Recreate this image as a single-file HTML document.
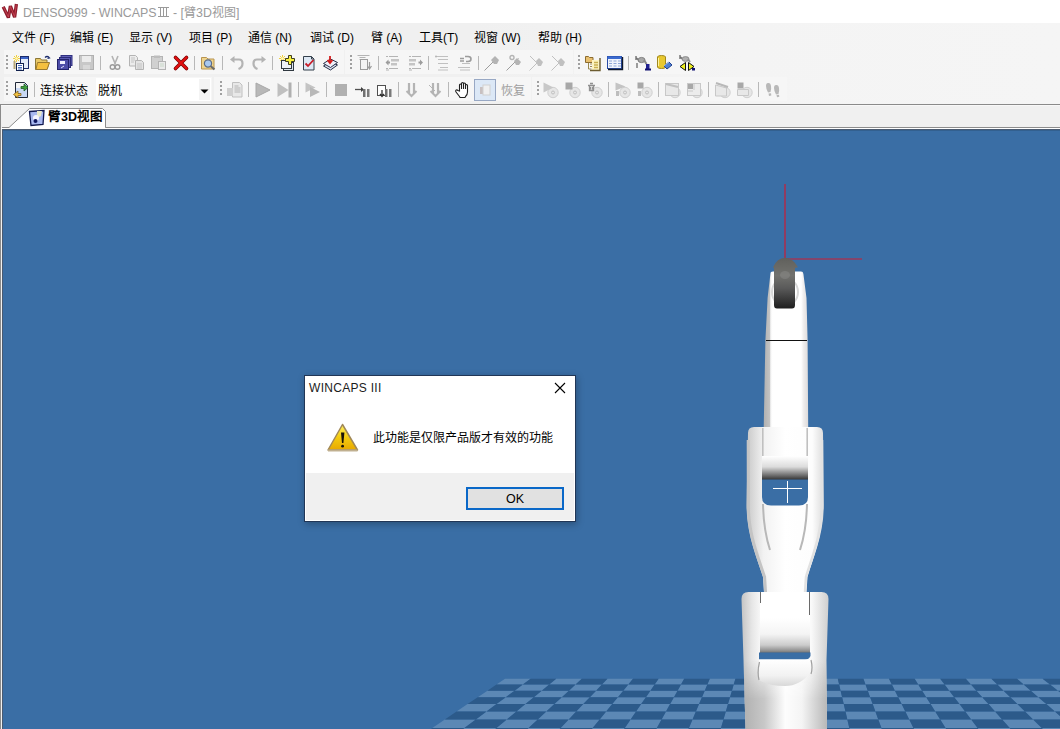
<!DOCTYPE html>
<html lang="zh-CN"><head><meta charset="utf-8">
<style>
*{box-sizing:border-box}
html,body{margin:0;padding:0;width:1060px;height:729px;overflow:hidden;background:linear-gradient(90deg,#f0f0f0 0%,#f0f0f0 45%,#f4f4f4 70%,#f5f5f5 100%);font-family:"Liberation Sans",sans-serif;font-size:12px;color:#000}
.abs{position:absolute}
.ic{position:absolute;overflow:visible}
.txt{white-space:nowrap;font-size:12px;line-height:14px}
#title{left:0;top:0;width:1060px;height:23px;background:#fff}
#title .t{left:23px;top:6px;color:#9a9a9a;font-size:12.4px;line-height:15px;white-space:nowrap}
#menu{left:0;top:23px;width:1060px;height:26px;background:transparent}
#menu span{position:absolute;top:8px;white-space:nowrap;font-size:12px;line-height:14px;color:#000}
.tb{background:#f6f6f6}
.grip{position:absolute;width:2px;height:2px;background:#a0a0a0}
.sep{position:absolute;width:1px;background:#b8b8b8}
#view{left:3px;top:130px;width:1057px;height:599px;background:#3a6ea5;overflow:hidden}
</style></head><body>
<div id="title" class="abs">
  <svg class="ic" style="left:0;top:0" width="22" height="22" viewBox="0 0 22 22"><path d="M3.2 6.8 L8.4 17.6 L10.4 6 L14.6 17.2 L16.4 4" fill="none" stroke="#8c1c2c" stroke-width="3.3" stroke-linejoin="bevel"/><path d="M3.4 7 L8.4 17 L10.4 6.5 L14.6 16.6 L16.3 4.6" fill="none" stroke="#d24a5a" stroke-width="1" opacity="0.8"/></svg>
  <div class="abs t">DENSO999 - WINCAPS<svg width="11" height="10" viewBox="0 0 11 10" style="vertical-align:0px;margin:0 1px 0 1px"><path d="M0 0.5h11M0 9.5h11M2.5 0v10M5.5 0v10M8.5 0v10" stroke="#9a9a9a" stroke-width="1"/></svg> - [<span style="font-size:12px">臂</span>3D<span style="font-size:12px">视图</span>]</div>
</div>
<div id="menu" class="abs">
  <span style="left:12px">文件 (F)</span>
  <span style="left:70px">编辑 (E)</span>
  <span style="left:129px">显示 (V)</span>
  <span style="left:189px">项目 (P)</span>
  <span style="left:248px">通信 (N)</span>
  <span style="left:310px">调试 (D)</span>
  <span style="left:371px">臂 (A)</span>
  <span style="left:419px">工具(T)</span>
  <span style="left:474px">视窗 (W)</span>
  <span style="left:538px">帮助 (H)</span>
</div>
<div class="abs tb" style="left:4px;top:50px;width:340px;height:24px"></div>
<div class="abs tb" style="left:345px;top:50px;width:228px;height:24px"></div>
<div class="abs tb" style="left:574px;top:50px;width:126px;height:24px"></div>
<div class="abs tb" style="left:4px;top:77px;width:208px;height:24px"></div>
<div class="abs tb" style="left:214px;top:77px;width:317px;height:24px"></div>
<div class="abs tb" style="left:532px;top:77px;width:255px;height:24px"></div>
<div class="grip" style="left:6px;top:55px"></div><div class="grip" style="left:6px;top:59px"></div><div class="grip" style="left:6px;top:63px"></div><div class="grip" style="left:6px;top:67px"></div>
<div class="grip" style="left:350px;top:55px"></div><div class="grip" style="left:350px;top:59px"></div><div class="grip" style="left:350px;top:63px"></div><div class="grip" style="left:350px;top:67px"></div>
<div class="grip" style="left:578px;top:55px"></div><div class="grip" style="left:578px;top:59px"></div><div class="grip" style="left:578px;top:63px"></div><div class="grip" style="left:578px;top:67px"></div>
<svg class="ic" style="left:13px;top:55px" width="16" height="16" viewBox="0 0 16 16"><path d="M0 3.5h7M3.5 0v7M1 1l5 5M6 1l-5 5" stroke="#f0d040" stroke-width="1"/><circle cx="3.5" cy="3.5" r="1.3" fill="#fff8c0"/>
<rect x="0.5" y="6" width="2" height="8" fill="#b8a878"/>
<rect x="7.5" y="1.5" width="8" height="12" fill="#e4ecf8" stroke="#1c2c6c"/>
<rect x="8" y="2" width="7" height="2" fill="#3c64c8"/>
<rect x="3.5" y="8.5" width="7" height="7" fill="#fff" stroke="#10204c"/>
<path d="M5 10.5h4M5 12.5h4M5 14h4" stroke="#4a70c0"/></svg>
<svg class="ic" style="left:35px;top:55px" width="16" height="16" viewBox="0 0 16 16"><path d="M0.5 3.5h5l1 1.5h5.5v3H14l-2 6.5H0.5Z" fill="#e8c868" stroke="#8c7838"/>
<path d="M2.5 7.5h12l-2.5 7h-11Z" fill="#f4c040" stroke="#9a7a30"/>
<path d="M10 2.5q2-2 4 0M13 1.5l1.5 1.5-2 .5" stroke="#1c2c6c" fill="none" stroke-width="1.2"/></svg>
<svg class="ic" style="left:57px;top:55px" width="16" height="16" viewBox="0 0 16 16"><rect x="4" y="0.5" width="11" height="10" fill="#6060b8" stroke="#303080"/>
<rect x="2.5" y="2.5" width="11" height="10" fill="#5858b0" stroke="#2c2c78"/>
<rect x="0.5" y="4.5" width="11" height="10" fill="#4c4ca8" stroke="#24246c"/>
<rect x="3" y="6" width="5" height="3" fill="#f0f0ff"/><path d="M4 13l3-2" stroke="#e0e0ff"/></svg>
<svg class="ic" style="left:79px;top:55px" width="16" height="16" viewBox="0 0 16 16"><rect x="0.5" y="0.5" width="14" height="14" fill="#c8c8c8" stroke="#b0b0b0"/>
<rect x="3" y="1" width="9" height="6" fill="#ececec"/><rect x="4" y="10" width="7" height="4.5" fill="#d8d8d8"/></svg>
<svg class="ic" style="left:107px;top:55px" width="16" height="16" viewBox="0 0 16 16"><path d="M5 1l3.5 8.5M11 1l-3.5 8.5" stroke="#b4b4b4" stroke-width="1.6"/>
<circle cx="5.5" cy="12" r="2.3" fill="none" stroke="#9c9c9c" stroke-width="1.4"/><circle cx="10.5" cy="12" r="2.3" fill="none" stroke="#9c9c9c" stroke-width="1.4"/></svg>
<svg class="ic" style="left:129px;top:55px" width="16" height="16" viewBox="0 0 16 16"><path d="M0.5 0.5h6l2 2v8.5h-8Z" fill="#ececec" stroke="#b4b4b4"/>
<path d="M6.5 5.5h6l2 2v7h-8Z" fill="#e4e4e4" stroke="#b4b4b4"/>
<path d="M2 3h4M2 5h4M2 7h3M8 9h5M8 11h5M8 13h5" stroke="#c4c4c4"/></svg>
<svg class="ic" style="left:151px;top:55px" width="16" height="16" viewBox="0 0 16 16"><rect x="0.5" y="1.5" width="11" height="12" fill="#d0d0d0" stroke="#b4b4b4"/>
<rect x="3" y="0.5" width="6" height="2.5" fill="#bdbdbd"/>
<rect x="7.5" y="6.5" width="7" height="8" fill="#eaeaea" stroke="#b4b4b4"/>
<path d="M9 9h4M9 11h4" stroke="#c8d8c8"/></svg>
<svg class="ic" style="left:173px;top:55px" width="16" height="16" viewBox="0 0 16 16"><path d="M2.5 2.5l11 11M13.5 2.5l-11 11" stroke="#7a0000" stroke-width="3.6" stroke-linecap="round"/>
<path d="M2.5 2.5l11 11M13.5 2.5l-11 11" stroke="#e41010" stroke-width="2.2" stroke-linecap="round"/></svg>
<svg class="ic" style="left:201px;top:55px" width="16" height="16" viewBox="0 0 16 16"><path d="M0.5 2.5h5l1.5 1.5h6v10h-12.5Z" fill="#f0d48c" stroke="#b89450"/>
<circle cx="7" cy="8.5" r="3.6" fill="#a8c8f0" stroke="#5a6c88" stroke-width="1.2"/>
<path d="M9.5 11l4 3.5" stroke="#6a6a6a" stroke-width="2"/></svg>
<svg class="ic" style="left:229px;top:55px" width="16" height="16" viewBox="0 0 16 16"><path d="M4 4.5h6q3.5 0 3.5 4 0 4-4 5.5" fill="none" stroke="#b4b4b4" stroke-width="2.2"/><path d="M1 4.5l4.5-3.5v7Z" fill="#b4b4b4"/></svg>
<svg class="ic" style="left:251px;top:55px" width="16" height="16" viewBox="0 0 16 16"><path d="M12 4.5h-6q-3.5 0-3.5 4 0 4 4 5.5" fill="none" stroke="#b4b4b4" stroke-width="2.2"/><path d="M15 4.5l-4.5-3.5v7Z" fill="#b4b4b4"/></svg>
<svg class="ic" style="left:279px;top:55px" width="16" height="16" viewBox="0 0 16 16"><path d="M0 3.5h7M3.5 0v7M1 1l5 5M6 1l-5 5" stroke="#f0d040" stroke-width="1"/><circle cx="3.5" cy="3.5" r="1.3" fill="#fff8c0"/>
<rect x="4.5" y="7.5" width="10" height="8" fill="#dde6f0" stroke="#303840"/>
<rect x="2.5" y="5.5" width="10" height="8" fill="#eef2f8" stroke="#303840"/>
<path d="M9.5 0.5h3v3h3v3h-3v3h-3v-3h-3v-3h3Z" fill="#f8f040" stroke="#404020"/></svg>
<svg class="ic" style="left:301px;top:55px" width="16" height="16" viewBox="0 0 16 16"><path d="M2.5 1.5h8l2.5 2.5v11h-10.5Z" fill="#dde8f4" stroke="#34404c"/><path d="M10.5 1.5v2.5h2.5" fill="none" stroke="#34404c"/>
<path d="M4.5 8.5l2.5 2.5 5.5-6" fill="none" stroke="#c81c28" stroke-width="1.8"/></svg>
<svg class="ic" style="left:323px;top:55px" width="16" height="16" viewBox="0 0 16 16"><path d="M0.5 11l7-4.5 7 3.5-7 5Z" fill="#dfe4f4" stroke="#283048"/>
<path d="M0.5 8.5l7-4.5 7 3.5-7 5Z" fill="#eef0fa" stroke="#283048"/>
<path d="M7 1v6.5M4.5 5l2.5 3 2.5-3" fill="none" stroke="#d41c1c" stroke-width="1.8"/></svg>
<svg class="ic" style="left:357px;top:55px" width="16" height="16" viewBox="0 0 16 16"><path d="M0.5 0.5h12M2.5 2.5h6M2.5 4.5h3" stroke="#b4b4b4"/>
<rect x="3.5" y="4.5" width="7" height="10" fill="#f4f4f4" stroke="#9c9c9c"/>
<path d="M12.5 7v6M10.5 11l2 3 2-3" fill="none" stroke="#9c9c9c" stroke-width="1.2"/></svg>
<svg class="ic" style="left:385px;top:55px" width="16" height="16" viewBox="0 0 16 16"><path d="M1 1.5h2M4 1.5h9M4 13.5h9M1 13.5h2M1 15h3" stroke="#b4b4b4" stroke-width="1.2"/>
<rect x="6" y="4" width="8" height="2.5" fill="#c4c4c4"/><rect x="6" y="8" width="6" height="2.5" fill="#c4c4c4"/>
<path d="M0.5 7.5l3-3v2h1.5v2H3.5v2Z" fill="#9c9c9c"/></svg>
<svg class="ic" style="left:408px;top:55px" width="16" height="16" viewBox="0 0 16 16"><path d="M1 1.5h2M4 1.5h9M4 13.5h9M1 13.5h2M1 15h3" stroke="#b4b4b4" stroke-width="1.2"/>
<rect x="1" y="4" width="7" height="2.5" fill="#c4c4c4"/><rect x="1" y="8" width="6" height="2.5" fill="#c4c4c4"/>
<path d="M15 7.5l-3-3v2h-1.5v2H12v2Z" fill="#9c9c9c"/></svg>
<svg class="ic" style="left:435px;top:55px" width="16" height="16" viewBox="0 0 16 16"><path d="M1 1.5h12M3 4.5h10M3 8.5h10M5 12.5h8M3 15h10" stroke="#c0c0c0" stroke-width="1.2"/><circle cx="1" cy="1.5" r="1" fill="#b4b4b4"/></svg>
<svg class="ic" style="left:457px;top:55px" width="16" height="16" viewBox="0 0 16 16"><path d="M1 12.5h12M3 15h10M5 8.5h8" stroke="#c0c0c0" stroke-width="1.2"/><path d="M8 1.5h3q3 0 3 2.5t-3 2.5H9M3 3.5h4M3 6h4" fill="none" stroke="#9c9c9c" stroke-width="1.6"/></svg>
<svg class="ic" style="left:484px;top:55px" width="16" height="16" viewBox="0 0 16 16"><path d="M0.5 15.5l9-9" stroke="#9c9c9c"/><path d="M7 5l4-4 4 4-2 4h-3Z" fill="#b4b4b4"/></svg>
<svg class="ic" style="left:506px;top:55px" width="16" height="16" viewBox="0 0 16 16"><path d="M0.5 15.5l12-12" stroke="#9c9c9c"/><path d="M8 6l3-3 4 4-2 3h-3Z" fill="#b4b4b4"/><circle cx="6" cy="2.5" r="2" fill="none" stroke="#b4b4b4" stroke-width="1.4"/></svg>
<svg class="ic" style="left:529px;top:55px" width="16" height="16" viewBox="0 0 16 16"><path d="M0.5 15.5l9-9M1 1l7 7" stroke="#c0c0c0"/><path d="M7 6l3-3 4 4-2 4h-3Z" fill="#c0c0c0"/></svg>
<svg class="ic" style="left:551px;top:55px" width="16" height="16" viewBox="0 0 16 16"><path d="M0.5 15.5l9-9M1 1l7 7" stroke="#c0c0c0"/><path d="M7 6l3-3 4 4-2 4h-3Z" fill="#c0c0c0"/></svg>
<svg class="ic" style="left:585px;top:55px" width="16" height="16" viewBox="0 0 16 16"><path d="M0.5 1.5h3l1 1h3.5v5h-7.5Z" fill="#e8c070" stroke="#8c6c30"/>
<path d="M3.5 8v6h3M5 9h3M5 11.5h3" fill="none" stroke="#9a8a50"/>
<rect x="7" y="5" width="8" height="10" fill="#fcf4c0"/><path d="M15 3v12.5H5" fill="none" stroke="#6c5c30" stroke-width="1.4"/>
<path d="M9 7.5h4M9 10h4M9 12.5h4" stroke="#c8b050" stroke-width="1.4"/></svg>
<svg class="ic" style="left:607px;top:55px" width="16" height="16" viewBox="0 0 16 16"><rect x="0.5" y="1.5" width="14" height="12" fill="#f0f4fc" stroke="#284ca8"/>
<rect x="0.5" y="1.5" width="14" height="2.5" fill="#3c6cd0"/>
<path d="M2 6h3M6.5 6h3M11 6h3M2 8.5h3M6.5 8.5h3M11 8.5h3M2 11h3M6.5 11h3M11 11h3" stroke="#90a8d8"/>
<path d="M15.5 2v12.5H1" fill="none" stroke="#101828" stroke-width="1.4"/></svg>
<svg class="ic" style="left:635px;top:55px" width="16" height="16" viewBox="0 0 16 16"><path d="M1 1v4M1.5 3l3 3" stroke="#707070" stroke-width="1.4"/><ellipse cx="6.5" cy="5" rx="3.5" ry="2.6" fill="#a8a8a8" stroke="#707070" stroke-width="0.8"/>
<path d="M9 5l2.5 4" stroke="#8a8a8a" stroke-width="2"/><path d="M2 8v5" stroke="#606060" stroke-width="1.2"/>
<rect x="11" y="9" width="3.5" height="5" fill="#202090"/><rect x="10" y="13.5" width="6" height="2" fill="#101070"/></svg>
<svg class="ic" style="left:657px;top:55px" width="16" height="16" viewBox="0 0 16 16"><path d="M0.5 2q0-1.5 4-1.5t4 1.5v10q0 1.5-4 1.5t-4-1.5Z" fill="#e8c830" stroke="#a08820"/>
<path d="M1.5 3v8" stroke="#fff4a0"/>
<path d="M7 11l5-4 3 3-5 4Z" fill="#5080d0" stroke="#204090"/><path d="M7 11l5-4" stroke="#a0c0f0"/></svg>
<svg class="ic" style="left:679px;top:55px" width="16" height="16" viewBox="0 0 16 16"><path d="M1 0v4M1.5 2l3 3" stroke="#707070" stroke-width="1.4"/><ellipse cx="6.5" cy="4" rx="3.5" ry="2.4" fill="#b0b0b0" stroke="#808080" stroke-width="0.8"/><path d="M9 4l2 3" stroke="#909090" stroke-width="1.8"/>
<path d="M6.5 7.5v8L1 11.5Z" fill="#f0f020" stroke="#101010"/>
<path d="M9.5 7.5v8l5.5-4Z" fill="#f0f020" stroke="#101010"/><rect x="13" y="13" width="3" height="2.5" fill="#101070"/></svg>
<div class="sep" style="left:100px;top:56px;height:14px"></div>
<div class="sep" style="left:194px;top:56px;height:14px"></div>
<div class="sep" style="left:222px;top:56px;height:14px"></div>
<div class="sep" style="left:272px;top:56px;height:14px"></div>
<div class="sep" style="left:378px;top:56px;height:14px"></div>
<div class="sep" style="left:428px;top:56px;height:14px"></div>
<div class="sep" style="left:478px;top:56px;height:14px"></div>
<div class="sep" style="left:628px;top:56px;height:14px"></div>
<div class="grip" style="left:6px;top:81px"></div><div class="grip" style="left:6px;top:85px"></div><div class="grip" style="left:6px;top:89px"></div><div class="grip" style="left:6px;top:93px"></div>
<div class="grip" style="left:220px;top:81px"></div><div class="grip" style="left:220px;top:85px"></div><div class="grip" style="left:220px;top:89px"></div><div class="grip" style="left:220px;top:93px"></div>
<div class="grip" style="left:537px;top:81px"></div><div class="grip" style="left:537px;top:85px"></div><div class="grip" style="left:537px;top:89px"></div><div class="grip" style="left:537px;top:93px"></div>
<svg class="ic" style="left:13px;top:82px" width="16" height="16" viewBox="0 0 16 16"><path d="M2.5 0.5h9l3 3v12h-12Z" fill="#c8d8f4" stroke="#202838"/>
<path d="M3 1h8v5H3Z" fill="#f4f4f4"/>
<path d="M8 4.5h3v-2.5l4 3.5-4 3.5v-2.5H8Z" fill="#40a040" stroke="#206020" stroke-width="0.8"/>
<path d="M8 11.5H5v-2.5l-4.5 3.5 4.5 3.5v-2.5h3Z" fill="#f0c040" stroke="#806020" stroke-width="0.8"/></svg>
<svg class="ic" style="left:227px;top:82px" width="16" height="16" viewBox="0 0 16 16"><path d="M5.5 0.5h7l2.5 2.5v12h-9.5Z" fill="#e8e8e8" stroke="#c0c0c0"/><rect x="0" y="6" width="6" height="8" fill="#d0d0d0"/>
<path d="M7.5 4h4M7.5 6h6M7.5 8h6M7.5 10h6" stroke="#b4b4b4"/></svg>
<svg class="ic" style="left:255px;top:82px" width="16" height="16" viewBox="0 0 16 16"><path d="M1 1l14 7-14 7Z" fill="#b8b8b8" stroke="#a8a8a8"/></svg>
<svg class="ic" style="left:277px;top:82px" width="16" height="16" viewBox="0 0 16 16"><path d="M0.5 1l11 7-11 7Z" fill="#c0c0c0"/><rect x="11.5" y="0.5" width="3" height="15" fill="#b0b0b0"/></svg>
<svg class="ic" style="left:305px;top:82px" width="16" height="16" viewBox="0 0 16 16"><path d="M0.5 0.5l10 5-10 5Z" fill="#c4c4c4"/><path d="M5 5l10 5-10 5Z" fill="#b8b8b8"/></svg>
<svg class="ic" style="left:333px;top:82px" width="16" height="16" viewBox="0 0 16 16"><rect x="2" y="2" width="12" height="12" fill="#b0b0b0"/></svg>
<svg class="ic" style="left:355px;top:82px" width="16" height="16" viewBox="0 0 16 16"><path d="M0 7.5h8" stroke="#505050" stroke-width="1.3"/><path d="M6 5l3 2.5-3 2.5Z" fill="#404040"/>
<rect x="8" y="7" width="2.5" height="8" fill="#707070"/><rect x="12" y="7" width="2.5" height="8" fill="#7a7a7a"/></svg>
<svg class="ic" style="left:377px;top:82px" width="16" height="16" viewBox="0 0 16 16"><rect x="0.5" y="3.5" width="8" height="10" fill="#fff" stroke="#505050"/>
<path d="M5 8v6M3 12l2 2.5 2-2.5" fill="none" stroke="#303030" stroke-width="1.3"/>
<rect x="8" y="7" width="2.5" height="8" fill="#707070"/><rect x="12" y="7" width="2.5" height="8" fill="#7a7a7a"/></svg>
<svg class="ic" style="left:406px;top:82px" width="16" height="16" viewBox="0 0 16 16"><path d="M3 1v10M8 1v10" stroke="#b4b4b4" stroke-width="2.2"/><path d="M0.5 9l5 5 5-5" fill="none" stroke="#b4b4b4" stroke-width="2"/></svg>
<svg class="ic" style="left:428px;top:82px" width="16" height="16" viewBox="0 0 16 16"><path d="M5 1v10M10 1v10" stroke="#b4b4b4" stroke-width="2.2"/><path d="M2.5 9l5 5 5-5" fill="none" stroke="#b4b4b4" stroke-width="2"/><path d="M1 3l6 6" stroke="#b4b4b4"/></svg>
<svg class="ic" style="left:455px;top:82px" width="16" height="16" viewBox="0 0 16 16"><path d="M4.5 9V3q0-1 1-1t1 1v4V1.5q0-1 1-1t1 1V7V2q0-1 1-1t1 1v5V3.5q0-1 1-1t1 1V10q0 3-2 4.5l-.5 1h-5l-.5-1L1 10q-.8-1 0-1.8t2 .3Z" fill="#fff" stroke="#202020" stroke-width="1.1"/></svg>
<svg class="ic" style="left:543px;top:82px" width="16" height="16" viewBox="0 0 16 16"><circle cx="10" cy="10.5" r="5.2" fill="#e6e6e6" stroke="#d0d0d0"/><circle cx="10" cy="10.5" r="1.5" fill="none" stroke="#c0c0c0"/><path d="M0.5 0.5l10 5-10 5Z" fill="#c8c8c8"/></svg>
<svg class="ic" style="left:565px;top:82px" width="16" height="16" viewBox="0 0 16 16"><circle cx="10" cy="10.5" r="5.2" fill="#e6e6e6" stroke="#d0d0d0"/><circle cx="10" cy="10.5" r="1.5" fill="none" stroke="#c0c0c0"/><rect x="0.5" y="0.5" width="7" height="7" fill="#a8a8a8"/></svg>
<svg class="ic" style="left:587px;top:82px" width="16" height="16" viewBox="0 0 16 16"><circle cx="10" cy="10.5" r="5.2" fill="#e6e6e6" stroke="#d0d0d0"/><circle cx="10" cy="10.5" r="1.5" fill="none" stroke="#c0c0c0"/><path d="M1 3.5h7M2.5 3.5v5h4v-5M3.5 5v2.5M5.5 5v2.5M3 1.5h3" fill="none" stroke="#909090" stroke-width="1.3"/></svg>
<svg class="ic" style="left:615px;top:82px" width="16" height="16" viewBox="0 0 16 16"><circle cx="10" cy="10.5" r="5.2" fill="#e6e6e6" stroke="#d0d0d0"/><circle cx="10" cy="10.5" r="1.5" fill="none" stroke="#c0c0c0"/><path d="M0.5 0.5l10 4-10 4Z" fill="#c4c4c4"/><rect x="1" y="9" width="3" height="5" fill="#bdbdbd"/></svg>
<svg class="ic" style="left:637px;top:82px" width="16" height="16" viewBox="0 0 16 16"><circle cx="10" cy="10.5" r="5.2" fill="#e6e6e6" stroke="#d0d0d0"/><circle cx="10" cy="10.5" r="1.5" fill="none" stroke="#c0c0c0"/><rect x="0.5" y="0.5" width="6" height="6" fill="#a8a8a8"/><rect x="1" y="9" width="3" height="5" fill="#bdbdbd"/></svg>
<svg class="ic" style="left:665px;top:82px" width="16" height="16" viewBox="0 0 16 16"><circle cx="10" cy="10.5" r="5.2" fill="#e6e6e6" stroke="#d0d0d0"/><circle cx="10" cy="10.5" r="1.5" fill="none" stroke="#c0c0c0"/><rect x="0.5" y="1.5" width="13" height="12" fill="#e8e8e8" stroke="#c8c8c8"/><path d="M1 2l12 3" stroke="#c0c0c0" stroke-width="2"/></svg>
<svg class="ic" style="left:687px;top:82px" width="16" height="16" viewBox="0 0 16 16"><circle cx="10" cy="10.5" r="5.2" fill="#e6e6e6" stroke="#d0d0d0"/><circle cx="10" cy="10.5" r="1.5" fill="none" stroke="#c0c0c0"/><rect x="0.5" y="1.5" width="13" height="12" fill="#ececec" stroke="#c8c8c8"/><rect x="1" y="2" width="5" height="5" fill="#a8a8a8"/><path d="M1 9h5M7 2v6" stroke="#c8c8c8"/></svg>
<svg class="ic" style="left:715px;top:82px" width="16" height="16" viewBox="0 0 16 16"><circle cx="10" cy="10.5" r="5.2" fill="#e6e6e6" stroke="#d0d0d0"/><circle cx="10" cy="10.5" r="1.5" fill="none" stroke="#c0c0c0"/><path d="M0.5 3l11 3v8H0.5Z" fill="#e8e8e8" stroke="#c8c8c8"/><path d="M1 1l12 4" stroke="#b8b8b8" stroke-width="2"/></svg>
<svg class="ic" style="left:737px;top:82px" width="16" height="16" viewBox="0 0 16 16"><circle cx="10" cy="10.5" r="5.2" fill="#e6e6e6" stroke="#d0d0d0"/><circle cx="10" cy="10.5" r="1.5" fill="none" stroke="#c0c0c0"/><rect x="0.5" y="0.5" width="6" height="6" fill="#a8a8a8"/><path d="M0.5 7.5h11v6H0.5Z" fill="#e8e8e8" stroke="#c8c8c8"/></svg>
<svg class="ic" style="left:765px;top:82px" width="16" height="16" viewBox="0 0 16 16"><path d="M3 1q2.5-.5 3 3t-.5 6l-2.5.5Q1 7 1 4t2-3Z" fill="#b8b8b8"/><path d="M3.5 11.5l2.5-.3.3 2.3-2.3.5Z" fill="#b8b8b8"/>
<path d="M11 3q2.5-.5 3 3t-.5 6l-2.5.5Q9 9 9 6t2-3Z" fill="#b8b8b8"/><path d="M11.5 13l2.5-.3.3 2-2.3.5Z" fill="#b8b8b8"/></svg>
<div class="sep" style="left:34px;top:82px;height:15px"></div>
<div class="sep" style="left:248px;top:82px;height:15px"></div>
<div class="sep" style="left:298px;top:82px;height:15px"></div>
<div class="sep" style="left:326px;top:82px;height:15px"></div>
<div class="sep" style="left:398px;top:82px;height:15px"></div>
<div class="sep" style="left:448px;top:82px;height:15px"></div>
<div class="sep" style="left:608px;top:82px;height:15px"></div>
<div class="sep" style="left:658px;top:82px;height:15px"></div>
<div class="sep" style="left:708px;top:82px;height:15px"></div>
<div class="sep" style="left:758px;top:82px;height:15px"></div>
<div class="abs txt" style="left:40px;top:84px">连接状态</div>
<div class="abs" style="left:96px;top:78px;width:115px;height:23px;background:#fff"></div>
<div class="abs" style="left:199px;top:79px;width:11px;height:21px;background:#f4f4f4"></div>
<svg class="ic" style="left:200px;top:89px" width="9" height="5" viewBox="0 0 9 5"><path d="M0.5 0.5h8l-4 4Z" fill="#000"/></svg>
<div class="abs txt" style="left:98px;top:84px">脱机</div>
<div class="abs" style="left:474px;top:79px;width:22px;height:22px;background:#dce8f6;border:1px solid #98a8c4"></div>
<svg class="ic" style="left:477px;top:82px" width="16" height="16" viewBox="0 0 16 16"><rect x="3" y="5" width="4" height="7" fill="#c8c0c0"/><rect x="6" y="3" width="7" height="10" fill="#f0f0f0" stroke="#d0d0d0"/></svg>
<div class="abs txt" style="left:501px;top:84px;color:#a0a0a0">恢复</div>
<div class="abs" style="left:0;top:104px;width:1060px;height:1px;background:#8a8a8a"></div>
<div class="abs" style="left:0;top:105px;width:1060px;height:25px;background:#f0f0f0"></div>
<div class="abs" style="left:0;top:104px;width:1px;height:625px;background:#8a8a8a"></div>
<div class="abs" style="left:2px;top:127px;width:1058px;height:1px;background:#a0a0a0"></div>
<div class="abs" style="left:1px;top:128px;width:1059px;height:1px;background:#fff"></div>
<div class="abs" style="left:2px;top:129px;width:1058px;height:1px;background:#4a5a70"></div>
<div class="abs" style="left:2px;top:129px;width:1px;height:600px;background:#4a5a70"></div>
<div class="abs" style="left:1px;top:105px;width:1059px;height:1px;background:#f8f8f8"></div>
<svg class="ic" style="left:0;top:104px" width="1060" height="26" viewBox="0 104 1060 26">
<path d="M2 129 V127.5 H9 L29.5 108.5 H102.5 L105.5 111.5 V129 Z" fill="#ffffff"/>
<path d="M2 127.5 H9 L29.5 108.5 H102.5 L105.5 111.5 V127.5 H1060" fill="none" stroke="#8c8c8c" stroke-width="1"/>
</svg>
<svg class="ic" style="left:28px;top:109px" width="18" height="18" viewBox="0 0 18 18">
<path d="M1.5 2.5 L16 1.5 L15 15.5 L3 16.5 Z" fill="#a8b8f0" stroke="#101850" stroke-width="1.3"/>
<path d="M9 2l5 0-1 5-4 2Z" fill="#e8e8c8"/>
<circle cx="8" cy="9" r="3" fill="#f4f4ff"/>
<circle cx="7.5" cy="12" r="2" fill="#101860"/>
</svg>
<div class="abs" style="left:48px;top:110px;font-weight:bold;font-size:12.5px;line-height:15px;white-space:nowrap">臂3D视图</div>

<div id="view" class="abs"><svg width="1057" height="599" viewBox="3 130 1057 599" style="position:absolute;left:0;top:0">
<defs>
<linearGradient id="gl" x1="0" x2="1" y1="0" y2="0"><stop offset="0" stop-color="#c8c8c8"/><stop offset="0.22" stop-color="#f2f2f2"/><stop offset="0.5" stop-color="#ffffff"/><stop offset="0.85" stop-color="#fdfdfd"/><stop offset="1" stop-color="#dcdcdc"/></linearGradient>
<linearGradient id="gcyl" x1="0" x2="0" y1="0" y2="1"><stop offset="0" stop-color="#ffffff"/><stop offset="0.45" stop-color="#dcdcdc"/><stop offset="0.85" stop-color="#606060"/><stop offset="1" stop-color="#303030"/></linearGradient>
<linearGradient id="gtool" x1="0" x2="0" y1="0" y2="1"><stop offset="0" stop-color="#60605c"/><stop offset="0.35" stop-color="#72726e"/><stop offset="0.6" stop-color="#5a5a5a"/><stop offset="1" stop-color="#1e1e1e"/></linearGradient>
<linearGradient id="gtoolh" x1="0" x2="1" y1="0" y2="0"><stop offset="0" stop-color="#000" stop-opacity="0.35"/><stop offset="0.4" stop-color="#000" stop-opacity="0"/><stop offset="1" stop-color="#000" stop-opacity="0.25"/></linearGradient>
<linearGradient id="gsh" x1="0" x2="1" y1="0" y2="0"><stop offset="0" stop-color="#c4c4c4"/><stop offset="0.12" stop-color="#e6e6e6"/><stop offset="0.22" stop-color="#f8f8f8"/><stop offset="0.5" stop-color="#ffffff"/><stop offset="0.8" stop-color="#fafafa"/><stop offset="1" stop-color="#cfcfcf"/></linearGradient>
<linearGradient id="gb" x1="0" x2="1" y1="0" y2="0"><stop offset="0" stop-color="#b0b0b0"/><stop offset="0.25" stop-color="#c8c8c8"/><stop offset="0.5" stop-color="#fdfdfd"/><stop offset="0.7" stop-color="#f4f4f4"/><stop offset="1" stop-color="#b8b8b8"/></linearGradient>
<linearGradient id="gdome" x1="0" x2="0" y1="0" y2="1"><stop offset="0" stop-color="#ffffff"/><stop offset="0.6" stop-color="#f2f2f2"/><stop offset="1" stop-color="#d8d8d8"/></linearGradient>
<linearGradient id="gfade" x1="0" x2="0" y1="0" y2="1"><stop offset="0" stop-color="#fff" stop-opacity="0"/><stop offset="0.55" stop-color="#fff" stop-opacity="1"/></linearGradient>
<mask id="mfade" maskUnits="userSpaceOnUse" x="740" y="660" width="90" height="70"><rect x="740" y="660" width="90" height="70" fill="url(#gfade)"/></mask>
<linearGradient id="gcyl2" x1="0" x2="0" y1="0" y2="1"><stop offset="0" stop-color="#ffffff"/><stop offset="0.45" stop-color="#f4f4f4"/><stop offset="0.75" stop-color="#cccccc"/><stop offset="0.92" stop-color="#8c8c8c"/><stop offset="1" stop-color="#565656"/></linearGradient>
<linearGradient id="gfa" x1="0" x2="1" y1="0" y2="0"><stop offset="0" stop-color="#b0b0b0"/><stop offset="0.13" stop-color="#c2c2c2"/><stop offset="0.16" stop-color="#f6f6f6"/><stop offset="0.2" stop-color="#ffffff"/><stop offset="0.84" stop-color="#ffffff"/><stop offset="0.9" stop-color="#eeecec"/><stop offset="1" stop-color="#dcdada"/></linearGradient>
</defs>
<path fill="#5c88b5" d="M505.00 678.70L530.60 678.70L522.83 684.49L496.46 684.49ZM556.20 678.70L581.80 678.70L575.55 684.49L549.19 684.49ZM607.40 678.70L633.00 678.70L628.27 684.49L601.91 684.49ZM658.60 678.70L684.20 678.70L680.99 684.49L654.63 684.49ZM709.80 678.70L735.40 678.70L733.71 684.49L707.35 684.49ZM761.00 678.70L786.60 678.70L786.43 684.49L760.07 684.49ZM812.20 678.70L837.80 678.70L839.15 684.49L812.79 684.49ZM863.40 678.70L889.00 678.70L891.87 684.49L865.51 684.49ZM914.60 678.70L940.20 678.70L944.59 684.49L918.23 684.49ZM965.80 678.70L991.40 678.70L997.32 684.49L970.95 684.49ZM1017.00 678.70L1042.60 678.70L1050.04 684.49L1023.68 684.49ZM1068.20 678.70L1093.80 678.70L1102.76 684.49L1076.40 684.49ZM522.83 684.49L549.19 684.49L541.74 690.63L514.57 690.63ZM575.55 684.49L601.91 684.49L596.08 690.63L568.91 690.63ZM628.27 684.49L654.63 684.49L650.41 690.63L623.24 690.63ZM680.99 684.49L707.35 684.49L704.75 690.63L677.58 690.63ZM733.71 684.49L760.07 684.49L759.08 690.63L731.92 690.63ZM786.43 684.49L812.79 684.49L813.42 690.63L786.25 690.63ZM839.15 684.49L865.51 684.49L867.75 690.63L840.59 690.63ZM891.87 684.49L918.23 684.49L922.09 690.63L894.92 690.63ZM944.59 684.49L970.95 684.49L976.42 690.63L949.26 690.63ZM997.32 684.49L1023.68 684.49L1030.76 690.63L1003.59 690.63ZM1050.04 684.49L1076.40 684.49L1085.10 690.63L1057.93 690.63ZM487.41 690.63L514.57 690.63L505.80 697.16L477.78 697.16ZM541.74 690.63L568.91 690.63L561.85 697.16L533.83 697.16ZM596.08 690.63L623.24 690.63L617.91 697.16L589.88 697.16ZM650.41 690.63L677.58 690.63L673.96 697.16L645.93 697.16ZM704.75 690.63L731.92 690.63L730.01 697.16L701.98 697.16ZM759.08 690.63L786.25 690.63L786.06 697.16L758.03 697.16ZM813.42 690.63L840.59 690.63L842.11 697.16L814.09 697.16ZM867.75 690.63L894.92 690.63L898.16 697.16L870.14 697.16ZM922.09 690.63L949.26 690.63L954.21 697.16L926.19 697.16ZM976.42 690.63L1003.59 690.63L1010.27 697.16L982.24 697.16ZM1030.76 690.63L1057.93 690.63L1066.32 697.16L1038.29 697.16ZM505.80 697.16L533.83 697.16L525.40 704.11L496.46 704.11ZM561.85 697.16L589.88 697.16L583.28 704.11L554.34 704.11ZM617.91 697.16L645.93 697.16L641.16 704.11L612.22 704.11ZM673.96 697.16L701.98 697.16L699.04 704.11L670.10 704.11ZM730.01 697.16L758.03 697.16L756.92 704.11L727.98 704.11ZM786.06 697.16L814.09 697.16L814.80 704.11L785.86 704.11ZM842.11 697.16L870.14 697.16L872.68 704.11L843.74 704.11ZM898.16 697.16L926.19 697.16L930.56 704.11L901.62 704.11ZM954.21 697.16L982.24 697.16L988.44 704.11L959.50 704.11ZM1010.27 697.16L1038.29 697.16L1046.32 704.11L1017.38 704.11ZM1066.32 697.16L1094.34 697.16L1104.19 704.11L1075.26 704.11ZM467.52 704.11L496.46 704.11L486.48 711.54L456.57 711.54ZM525.40 704.11L554.34 704.11L546.31 711.54L516.40 711.54ZM583.28 704.11L612.22 704.11L606.15 711.54L576.23 711.54ZM641.16 704.11L670.10 704.11L665.98 711.54L636.06 711.54ZM699.04 704.11L727.98 704.11L725.81 711.54L695.89 711.54ZM756.92 704.11L785.86 704.11L785.64 711.54L755.72 711.54ZM814.80 704.11L843.74 704.11L845.47 711.54L815.55 711.54ZM872.68 704.11L901.62 704.11L905.30 711.54L875.39 711.54ZM930.56 704.11L959.50 704.11L965.13 711.54L935.22 711.54ZM988.44 704.11L1017.38 704.11L1024.96 711.54L995.05 711.54ZM1046.32 704.11L1075.26 704.11L1084.80 711.54L1054.88 711.54ZM486.48 711.54L516.40 711.54L506.77 719.48L475.81 719.48ZM546.31 711.54L576.23 711.54L568.69 719.48L537.73 719.48ZM606.15 711.54L636.06 711.54L630.61 719.48L599.65 719.48ZM665.98 711.54L695.89 711.54L692.53 719.48L661.57 719.48ZM725.81 711.54L755.72 711.54L754.45 719.48L723.49 719.48ZM785.64 711.54L815.55 711.54L816.37 719.48L785.41 719.48ZM845.47 711.54L875.39 711.54L878.28 719.48L847.33 719.48ZM905.30 711.54L935.22 711.54L940.20 719.48L909.24 719.48ZM965.13 711.54L995.05 711.54L1002.12 719.48L971.16 719.48ZM1024.96 711.54L1054.88 711.54L1064.04 719.48L1033.08 719.48ZM444.85 719.48L475.81 719.48L464.37 728.00L432.29 728.00ZM506.77 719.48L537.73 719.48L528.53 728.00L496.45 728.00ZM568.69 719.48L599.65 719.48L592.69 728.00L560.61 728.00ZM630.61 719.48L661.57 719.48L656.84 728.00L624.76 728.00ZM692.53 719.48L723.49 719.48L721.00 728.00L688.92 728.00ZM754.45 719.48L785.41 719.48L785.16 728.00L753.08 728.00ZM816.37 719.48L847.33 719.48L849.31 728.00L817.24 728.00ZM878.28 719.48L909.24 719.48L913.47 728.00L881.39 728.00ZM940.20 719.48L971.16 719.48L977.63 728.00L945.55 728.00ZM1002.12 719.48L1033.08 719.48L1041.79 728.00L1009.71 728.00ZM1064.04 719.48L1095.00 719.48L1105.94 728.00L1073.87 728.00ZM464.37 728.00L496.45 728.00L485.35 737.15L452.07 737.15ZM528.53 728.00L560.61 728.00L551.92 737.15L518.63 737.15ZM592.69 728.00L624.76 728.00L618.48 737.15L585.20 737.15ZM656.84 728.00L688.92 728.00L685.04 737.15L651.76 737.15ZM721.00 728.00L753.08 728.00L751.61 737.15L718.33 737.15ZM785.16 728.00L817.24 728.00L818.17 737.15L784.89 737.15ZM849.31 728.00L881.39 728.00L884.74 737.15L851.45 737.15ZM913.47 728.00L945.55 728.00L951.30 737.15L918.02 737.15ZM977.63 728.00L1009.71 728.00L1017.86 737.15L984.58 737.15ZM1041.79 728.00L1073.87 728.00L1084.43 737.15L1051.15 737.15Z"/>
<path fill="#2c5a8a" d="M530.60 678.70L556.20 678.70L549.19 684.49L522.83 684.49ZM581.80 678.70L607.40 678.70L601.91 684.49L575.55 684.49ZM633.00 678.70L658.60 678.70L654.63 684.49L628.27 684.49ZM684.20 678.70L709.80 678.70L707.35 684.49L680.99 684.49ZM735.40 678.70L761.00 678.70L760.07 684.49L733.71 684.49ZM786.60 678.70L812.20 678.70L812.79 684.49L786.43 684.49ZM837.80 678.70L863.40 678.70L865.51 684.49L839.15 684.49ZM889.00 678.70L914.60 678.70L918.23 684.49L891.87 684.49ZM940.20 678.70L965.80 678.70L970.95 684.49L944.59 684.49ZM991.40 678.70L1017.00 678.70L1023.68 684.49L997.32 684.49ZM1042.60 678.70L1068.20 678.70L1076.40 684.49L1050.04 684.49ZM496.46 684.49L522.83 684.49L514.57 690.63L487.41 690.63ZM549.19 684.49L575.55 684.49L568.91 690.63L541.74 690.63ZM601.91 684.49L628.27 684.49L623.24 690.63L596.08 690.63ZM654.63 684.49L680.99 684.49L677.58 690.63L650.41 690.63ZM707.35 684.49L733.71 684.49L731.92 690.63L704.75 690.63ZM760.07 684.49L786.43 684.49L786.25 690.63L759.08 690.63ZM812.79 684.49L839.15 684.49L840.59 690.63L813.42 690.63ZM865.51 684.49L891.87 684.49L894.92 690.63L867.75 690.63ZM918.23 684.49L944.59 684.49L949.26 690.63L922.09 690.63ZM970.95 684.49L997.32 684.49L1003.59 690.63L976.42 690.63ZM1023.68 684.49L1050.04 684.49L1057.93 690.63L1030.76 690.63ZM514.57 690.63L541.74 690.63L533.83 697.16L505.80 697.16ZM568.91 690.63L596.08 690.63L589.88 697.16L561.85 697.16ZM623.24 690.63L650.41 690.63L645.93 697.16L617.91 697.16ZM677.58 690.63L704.75 690.63L701.98 697.16L673.96 697.16ZM731.92 690.63L759.08 690.63L758.03 697.16L730.01 697.16ZM786.25 690.63L813.42 690.63L814.09 697.16L786.06 697.16ZM840.59 690.63L867.75 690.63L870.14 697.16L842.11 697.16ZM894.92 690.63L922.09 690.63L926.19 697.16L898.16 697.16ZM949.26 690.63L976.42 690.63L982.24 697.16L954.21 697.16ZM1003.59 690.63L1030.76 690.63L1038.29 697.16L1010.27 697.16ZM1057.93 690.63L1085.10 690.63L1094.34 697.16L1066.32 697.16ZM477.78 697.16L505.80 697.16L496.46 704.11L467.52 704.11ZM533.83 697.16L561.85 697.16L554.34 704.11L525.40 704.11ZM589.88 697.16L617.91 697.16L612.22 704.11L583.28 704.11ZM645.93 697.16L673.96 697.16L670.10 704.11L641.16 704.11ZM701.98 697.16L730.01 697.16L727.98 704.11L699.04 704.11ZM758.03 697.16L786.06 697.16L785.86 704.11L756.92 704.11ZM814.09 697.16L842.11 697.16L843.74 704.11L814.80 704.11ZM870.14 697.16L898.16 697.16L901.62 704.11L872.68 704.11ZM926.19 697.16L954.21 697.16L959.50 704.11L930.56 704.11ZM982.24 697.16L1010.27 697.16L1017.38 704.11L988.44 704.11ZM1038.29 697.16L1066.32 697.16L1075.26 704.11L1046.32 704.11ZM496.46 704.11L525.40 704.11L516.40 711.54L486.48 711.54ZM554.34 704.11L583.28 704.11L576.23 711.54L546.31 711.54ZM612.22 704.11L641.16 704.11L636.06 711.54L606.15 711.54ZM670.10 704.11L699.04 704.11L695.89 711.54L665.98 711.54ZM727.98 704.11L756.92 704.11L755.72 711.54L725.81 711.54ZM785.86 704.11L814.80 704.11L815.55 711.54L785.64 711.54ZM843.74 704.11L872.68 704.11L875.39 711.54L845.47 711.54ZM901.62 704.11L930.56 704.11L935.22 711.54L905.30 711.54ZM959.50 704.11L988.44 704.11L995.05 711.54L965.13 711.54ZM1017.38 704.11L1046.32 704.11L1054.88 711.54L1024.96 711.54ZM456.57 711.54L486.48 711.54L475.81 719.48L444.85 719.48ZM516.40 711.54L546.31 711.54L537.73 719.48L506.77 719.48ZM576.23 711.54L606.15 711.54L599.65 719.48L568.69 719.48ZM636.06 711.54L665.98 711.54L661.57 719.48L630.61 719.48ZM695.89 711.54L725.81 711.54L723.49 719.48L692.53 719.48ZM755.72 711.54L785.64 711.54L785.41 719.48L754.45 719.48ZM815.55 711.54L845.47 711.54L847.33 719.48L816.37 719.48ZM875.39 711.54L905.30 711.54L909.24 719.48L878.28 719.48ZM935.22 711.54L965.13 711.54L971.16 719.48L940.20 719.48ZM995.05 711.54L1024.96 711.54L1033.08 719.48L1002.12 719.48ZM1054.88 711.54L1084.80 711.54L1095.00 719.48L1064.04 719.48ZM475.81 719.48L506.77 719.48L496.45 728.00L464.37 728.00ZM537.73 719.48L568.69 719.48L560.61 728.00L528.53 728.00ZM599.65 719.48L630.61 719.48L624.76 728.00L592.69 728.00ZM661.57 719.48L692.53 719.48L688.92 728.00L656.84 728.00ZM723.49 719.48L754.45 719.48L753.08 728.00L721.00 728.00ZM785.41 719.48L816.37 719.48L817.24 728.00L785.16 728.00ZM847.33 719.48L878.28 719.48L881.39 728.00L849.31 728.00ZM909.24 719.48L940.20 719.48L945.55 728.00L913.47 728.00ZM971.16 719.48L1002.12 719.48L1009.71 728.00L977.63 728.00ZM1033.08 719.48L1064.04 719.48L1073.87 728.00L1041.79 728.00ZM432.29 728.00L464.37 728.00L452.07 737.15L418.79 737.15ZM496.45 728.00L528.53 728.00L518.63 737.15L485.35 737.15ZM560.61 728.00L592.69 728.00L585.20 737.15L551.92 737.15ZM624.76 728.00L656.84 728.00L651.76 737.15L618.48 737.15ZM688.92 728.00L721.00 728.00L718.33 737.15L685.04 737.15ZM753.08 728.00L785.16 728.00L784.89 737.15L751.61 737.15ZM817.24 728.00L849.31 728.00L851.45 737.15L818.17 737.15ZM881.39 728.00L913.47 728.00L918.02 737.15L884.74 737.15ZM945.55 728.00L977.63 728.00L984.58 737.15L951.30 737.15ZM1009.71 728.00L1041.79 728.00L1051.15 737.15L1017.86 737.15Z"/>
<rect id="vtopshade" x="3" y="130" width="1057" height="1" fill="#33608f"/>
<!-- red axes -->
<line x1="785" y1="184" x2="785" y2="259" stroke="#cc1c34" stroke-width="1.2"/>
<line x1="785" y1="259" x2="862" y2="259" stroke="#cc1c34" stroke-width="1.2"/>
<!-- forearm -->
<path fill="url(#gfa)" d="M770.4 274 Q770.4 271.6 773 271.6 L801 271.6 Q803.2 271.6 803.4 274 L806.5 298 L807.6 340 L808.2 428 L763.7 428 L765.4 340 L767.6 298 Z"/>
<ellipse cx="785" cy="292" rx="13" ry="14" fill="none" stroke="#d8d8d8" stroke-width="2"/>
<line x1="766" y1="340.5" x2="807" y2="340.5" stroke="#111" stroke-width="1"/>
<!-- tool -->
<path fill="url(#gtool)" d="M774 305 L774 268 L773 267.3 Q777 258 785 257.7 Q793 258 798 267.3 L795 268 L795 305 Q795 308.5 792 308.5 L777 308.5 Q774 308.5 774 305 Z"/>
<ellipse cx="785" cy="275" rx="5" ry="4" fill="#9a9a9a" opacity="0.3"/>
<!-- lower link + elbow -->
<path fill="url(#gl)" d="M748 433 Q748 427 754 427 L817 427 Q823 427 823 433 L823.8 505 C823.8 535 813 558 807.5 577 L806 600 L764.5 600 L763 577 C757 558 746.5 535 746.5 505 Z"/>
<rect x="762" y="456" width="46" height="24" fill="url(#gcyl)"/>
<path d="M762.8 428V456M807.2 428V456" stroke="#c0c0c0" stroke-width="1.6"/>
<path fill="#3a6ea5" d="M762 479.5 L808 479.5 L808 497 Q808 505.5 799 505.5 L771 505.5 Q762 505.5 762 497 Z"/>
<line x1="773" y1="488.5" x2="802" y2="488.5" stroke="#fff" stroke-width="1"/>
<line x1="787.5" y1="481" x2="787.5" y2="503" stroke="#fff" stroke-width="1"/>
<path d="M763 504 Q763.5 530 770 550 M807 504 Q806.5 530 800 550" fill="none" stroke="#b8b8b8" stroke-width="2"/>
<path d="M748.2 440 L748.3 505 C748.3 535 758.6 558 764.6 577 L766 600" fill="none" stroke="#c4c4c4" stroke-width="3"/>
<path d="M822 440 L822 505 C822 535 811.5 558 806 577 L804.5 600" fill="none" stroke="#e2e2e2" stroke-width="2.5"/>
<!-- shoulder -->
<path fill="url(#gsh)" d="M741.5 599 Q741.5 592 748.5 592 L821.5 592 Q828.5 592 828.5 599 L826.5 660 L827 729 L745.5 729 L743.5 660 Z"/>
<path fill="url(#gb)" mask="url(#mfade)" d="M743.5 660 L826.5 660 L827 729 L745.5 729 Z"/>
<rect x="760" y="592" width="50" height="26" fill="#fff"/>
<rect x="760" y="618" width="50" height="36" fill="url(#gcyl2)"/>
<path fill="#3a6ea5" d="M759 652.5 L810.5 652.5 L810.5 656 Q809 659.5 805 659.5 L759 659.5 Z"/>
<path fill="url(#gdome)" d="M759 659.5 L810.5 659.5 L811 672 Q800 686 785 686 Q768 686 759 680 Z"/>
<line x1="760.5" y1="592" x2="760.5" y2="603" stroke="#6a6a6a" stroke-width="1"/>
<line x1="809.5" y1="592" x2="809.5" y2="615" stroke="#6a6a6a" stroke-width="1"/>
<path d="M759.5 662 Q757 672 759 680M811 660 Q813 668 811 674" fill="none" stroke="#a0a0a0" stroke-width="1.2"/>
</svg></div>
<div class="abs" style="left:304px;top:375px;width:272px;height:147px;background:#fff;border:1px solid #213656;box-shadow:1px 2px 7px rgba(0,0,0,0.28)"></div>
<div class="abs" style="left:306px;top:473px;width:268px;height:47px;background:#f0f0f0"></div>
<div class="abs txt" style="left:309px;top:381px;font-size:12px;letter-spacing:0.3px;color:#1c1c1c">WINCAPS III</div>
<svg class="ic" style="left:554px;top:382px" width="12" height="12" viewBox="0 0 12 12"><path d="M1 1l10 10M11 1L1 11" stroke="#000" stroke-width="1.1"/></svg>
<svg class="ic" style="left:327px;top:423px" width="32" height="29" viewBox="0 0 32 29">
<defs><linearGradient id="wy" x1="0" x2="0" y1="0" y2="1"><stop offset="0" stop-color="#fff060"/><stop offset="0.5" stop-color="#f4cc10"/><stop offset="1" stop-color="#e8a800"/></linearGradient></defs>
<path d="M15.5 1.5 L30.5 27 H1 Z" fill="url(#wy)" stroke="#a08858" stroke-width="1.5" stroke-linejoin="round"/>
<path d="M1 27.5 H30.5" stroke="#c0b090" stroke-width="2"/>
<path d="M14 9.5 H17.4 L16.4 20 H15 Z" fill="#1a1408"/>
<circle cx="15.6" cy="23.2" r="1.4" fill="#1a1408"/>
</svg>
<div class="abs txt" style="left:373px;top:431px;color:#000">此功能是仅限产品版才有效的功能</div>
<div class="abs" style="left:466px;top:487px;width:98px;height:23px;background:#e1e1e1;border:2px solid #0a68c8"></div>
<div class="abs txt" style="left:466px;top:492px;width:98px;text-align:center;font-size:12.5px">OK</div>

</body></html>
